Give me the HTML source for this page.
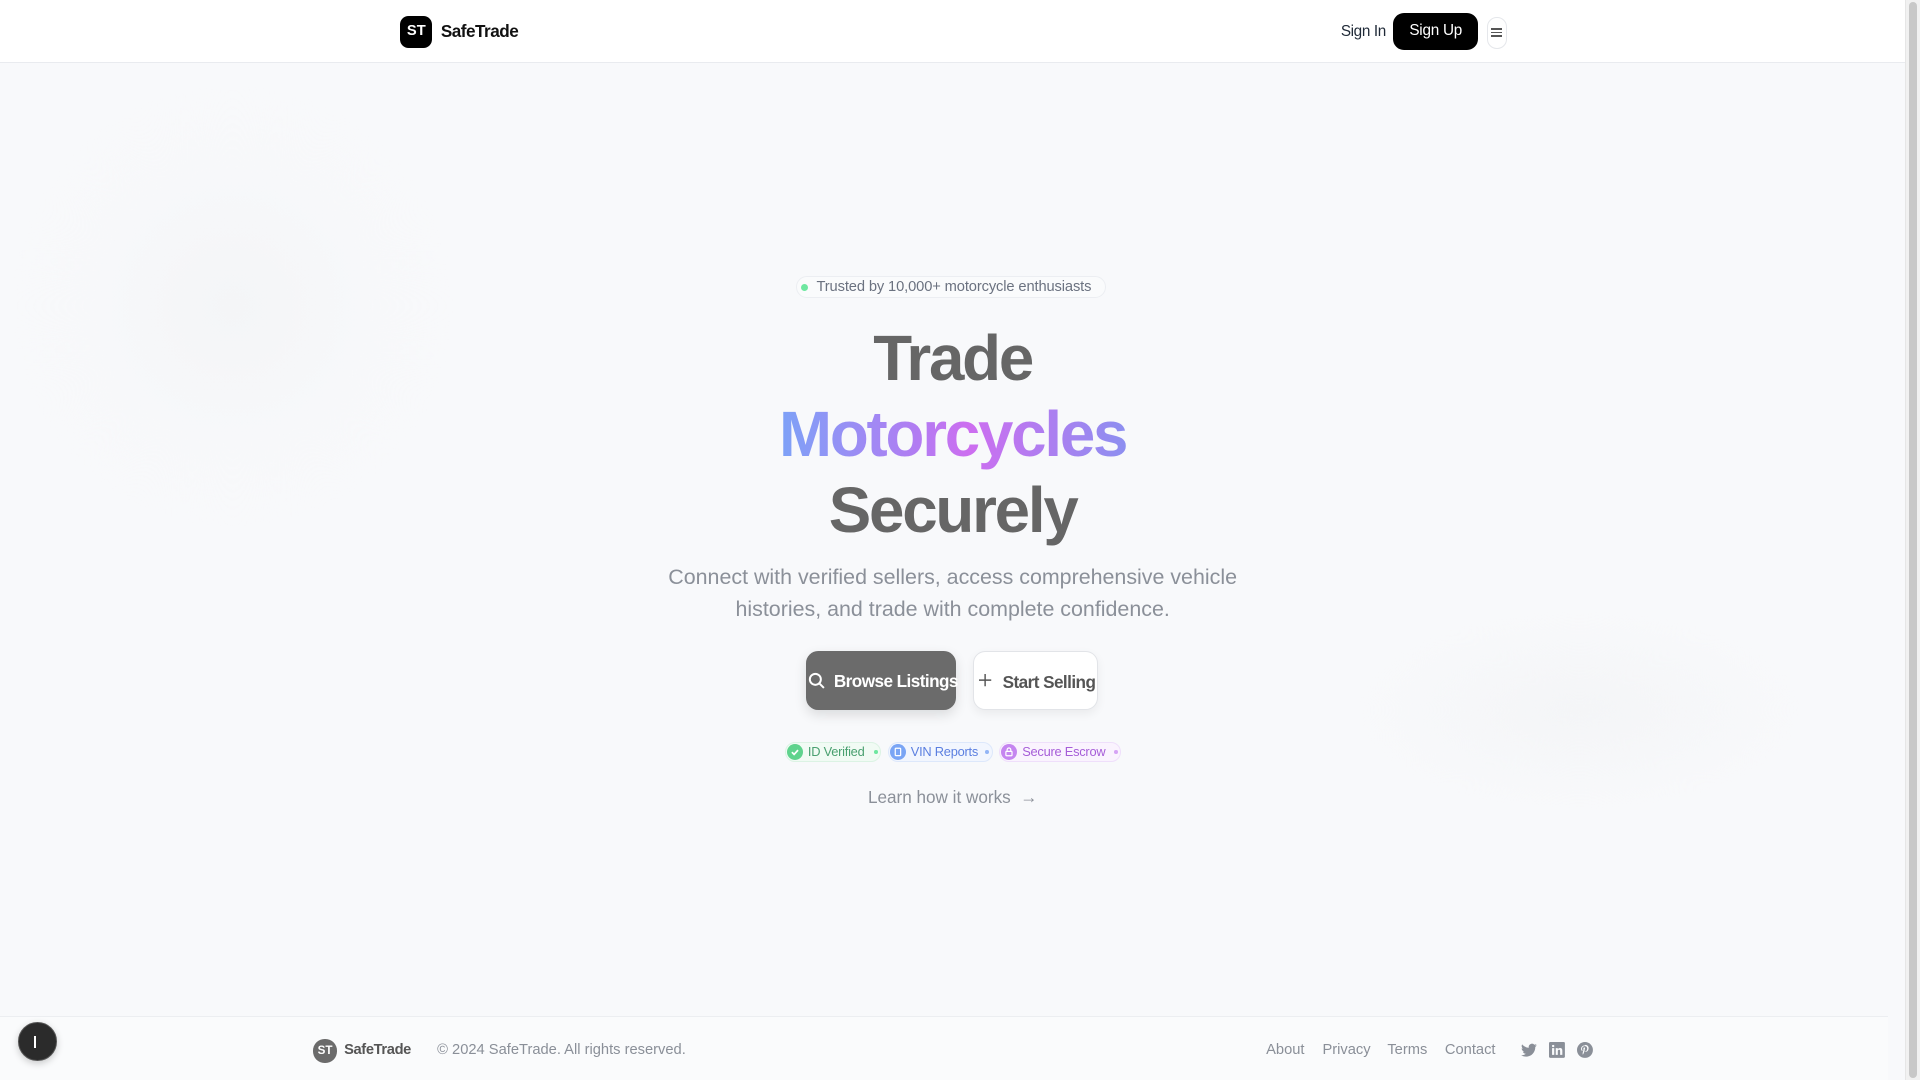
<!DOCTYPE html>
<html><head><meta charset="utf-8"><style>
html,body{margin:0;padding:0;overflow:hidden}
body{width:1568px;height:882px;zoom:1.22449;font-family:"Liberation Sans",sans-serif;background:#f8f9fb;position:relative}
.main{position:absolute;left:0;top:0;width:1556px;height:882px;background:radial-gradient(circle at 190px 250px,#f4f5f7 0,#f7f8fa 110px,transparent 180px),radial-gradient(ellipse at 1290px 580px,#f4f5f7 0,transparent 180px),#f8f9fb}
.sb{position:absolute;left:1556px;top:0;width:12px;height:882px;background:#f1f1f1;border-left:1px solid #e6e6e6}
.sb:after{content:"";position:absolute;left:2px;top:2px;width:7px;height:878px;background:#c8c8c8;border-radius:4px}
header{position:absolute;left:0;top:0;width:1556px;height:51px;background:#fff;border-bottom:1px solid #e9ebef}
.logo{position:absolute;left:327px;top:13px;width:26px;height:26px;background:#000;border-radius:7px;color:#fff;font-weight:bold;font-size:12px;text-align:center;line-height:26px}
.brand{position:absolute;left:360px;top:17px;font-weight:bold;font-size:14px;letter-spacing:-.4px;color:#111}
.signin{position:absolute;left:1095px;top:19px;font-size:12.5px;letter-spacing:-.3px;color:#1f2937}
.signup{position:absolute;left:1138px;top:11px;width:69px;height:30px;background:#000;border-radius:9px;color:#fff;font-size:12.5px;letter-spacing:-.2px;text-align:center;line-height:30px}
.menu{position:absolute;left:1214px;top:14px;width:15px;height:24px;border:1px solid #e5e7eb;border-radius:8px;background:#fff}
.menu i{position:absolute;left:3px;width:9px;height:1.5px;background:#555}
.c{position:absolute;left:0;width:1556px;text-align:center}
.pill{position:absolute;left:650px;top:225px;width:252px;height:17px;border:1px solid #eceef2;border-radius:10px;font-size:12px;letter-spacing:-.1px;color:#6b7280;line-height:17px;background:#fafbfc}
.pill b{position:absolute;left:3px;top:6px;width:6px;height:6px;border-radius:50%;background:#6ee7a0}
.pill span{position:absolute;left:16px;top:0}
h1{margin:0;font-size:52px;line-height:62px;font-weight:bold;color:#666;letter-spacing:-1.8px}
.grad{background:linear-gradient(90deg,#7da2f7,#b27cf2 40%,#cd6ef0 55%,#8d8ff0);-webkit-background-clip:text;background-clip:text;color:transparent}
p.sub{margin:0;font-size:17.5px;line-height:26px;color:#8b9099;letter-spacing:0}
.btn1{position:absolute;left:658px;top:532px;width:123px;height:48px;background:#6b6b6b;border-radius:10px;color:#fff;font-weight:bold;font-size:14px;letter-spacing:-.45px;box-shadow:0 4px 10px rgba(0,0,0,.12)}
.btn2{position:absolute;left:795px;top:532px;width:100px;height:46px;background:#fff;border:1px solid #e2e4e8;border-radius:10px;color:#555;font-weight:bold;font-size:14px;letter-spacing:-.45px;box-shadow:0 3px 8px rgba(0,0,0,.06)}
.btn1 span,.btn2 span{position:absolute;top:16px;white-space:nowrap}
.badge{position:absolute;top:606px;height:15px;border-radius:9px;font-size:10.5px;letter-spacing:-.2px;line-height:15px;white-space:nowrap}
.badge .ic{position:absolute;left:1px;top:1px;width:13px;height:13px;border-radius:50%}
.badge .t{position:absolute;left:18px;top:0}
.badge .d{position:absolute;top:6px;width:3px;height:3px;border-radius:50%}
footer{position:absolute;left:0;top:830px;width:1542px;height:52px;background:#fafbfc;border-top:1px solid #eceef1}
.fl{position:absolute;top:20px;font-size:12px;color:#8a8f98}
.fab{position:absolute;left:15px;top:835px;width:30px;height:30px;border-radius:50%;background:#2b2b2b;border:1px solid #555;box-shadow:0 2px 6px rgba(0,0,0,.2)}
.fab:after{content:"";position:absolute;left:12px;top:10px;width:1.5px;height:10px;background:#fff}
</style></head><body>
<div class="main"></div>
<div class="sb"></div>
<header>
<div class="logo">ST</div><div class="brand">SafeTrade</div>
<div class="signin">Sign In</div>
<div class="signup">Sign Up</div>
<div class="menu"><i style="top:8px"></i><i style="top:11px"></i><i style="top:14px"></i></div>
</header>
<div class="pill"><b></b><span>Trusted by 10,000+ motorcycle enthusiasts</span></div>
<div class="c" style="top:262px"><h1>Trade</h1><h1><span class="grad">Motorcycles</span></h1><h1>Securely</h1></div>
<div class="c" style="top:459px"><p class="sub">Connect with verified sellers, access comprehensive vehicle<br>histories, and trade with complete confidence.</p></div>
<div class="btn1"><svg style="position:absolute;left:2px;top:17px" width="14" height="14" viewBox="0 0 14 14" fill="none" stroke="#fff" stroke-width="1.6"><circle cx="6" cy="6" r="4.5"/><path d="M9.3 9.3L13 13"/></svg><span style="left:23px">Browse Listings</span></div>
<div class="btn2"><svg style="position:absolute;left:4px;top:18px" width="10" height="10" viewBox="0 0 11 11" stroke="#555" stroke-width="1.3"><path d="M5.5 0v11M0 5.5h11"/></svg><span style="left:23px">Start Selling</span></div>
<div class="badge" style="left:641px;width:77px;background:#f1fbf4;border:1px solid #dcf3e4;color:#4aa070"><div class="ic" style="background:#5fd38d"><svg width="13" height="13" viewBox="0 0 13 13" fill="none" stroke="#fff" stroke-width="1.4"><path d="M4 6.7l1.8 1.8L9 5"/></svg></div><span class="t">ID Verified</span><div class="d" style="left:72px;background:#6ee7a0"></div></div>
<div class="badge" style="left:725px;width:84px;background:#f2f6fe;border:1px solid #dde8fb;color:#5b7fe0"><div class="ic" style="background:#7aa5f5"><svg width="13" height="13" viewBox="0 0 13 13" fill="none" stroke="#fff" stroke-width="1"><rect x="4.3" y="3.5" width="4.4" height="6" rx=".6"/></svg></div><span class="t">VIN Reports</span><div class="d" style="left:79px;background:#93b5f6"></div></div>
<div class="badge" style="left:816px;width:98px;background:#faf3fe;border:1px solid #efdffb;color:#a65dd8"><div class="ic" style="background:#c585f0"><svg width="13" height="13" viewBox="0 0 13 13" fill="none" stroke="#fff" stroke-width="1"><rect x="4" y="6" width="5" height="3.6" rx=".5"/><path d="M5 6V4.8a1.5 1.5 0 013 0V6"/></svg></div><span class="t">Secure Escrow</span><div class="d" style="left:93px;background:#d6a3f5"></div></div>
<div class="c" style="top:643px;font-size:14px;color:#8b9099">Learn how it works &nbsp;→</div>
<footer>
<div style="position:absolute;left:256px;top:18px;width:19px;height:19px;border-radius:50%;background:#6b6b6b;color:#fff;font-size:9.5px;font-weight:bold;text-align:center;line-height:19px">ST</div>
<div class="fl" style="left:281px;color:#555;font-weight:bold;letter-spacing:-.3px">SafeTrade</div>
<div class="fl" style="left:357px">© 2024 SafeTrade. All rights reserved.</div>
<div class="fl" style="left:1034px">About</div>
<div class="fl" style="left:1080px">Privacy</div>
<div class="fl" style="left:1133px">Terms</div>
<div class="fl" style="left:1180px">Contact</div>
<svg style="position:absolute;left:1242px;top:21px" width="13" height="12" viewBox="0 0 24 20" fill="#8a8f98"><path d="M24 2.4a9.8 9.8 0 01-2.8.8A4.9 4.9 0 0023.3.4a9.9 9.9 0 01-3.1 1.2A4.9 4.9 0 0011.8 6 14 14 0 011.7.9a4.9 4.9 0 001.5 6.6A4.9 4.9 0 011 6.9a4.9 4.9 0 003.9 4.8 4.9 4.9 0 01-2.2.1 4.9 4.9 0 004.6 3.4A9.9 9.9 0 010 17.3 14 14 0 007.5 19.5c9.1 0 14-7.5 14-14v-.6A10 10 0 0024 2.4z"/></svg>
<svg style="position:absolute;left:1265px;top:20px" width="13" height="13" viewBox="0 0 13 13"><rect width="13" height="13" rx="1" fill="#8a8f98"/><path d="M2.5 5h1.8v5.5H2.5zM3.4 2.3a1 1 0 110 2 1 1 0 010-2zM5.5 5h1.7v.8c.3-.5.9-.9 1.8-.9 1.6 0 1.9 1 1.9 2.4v3.2H9.1V7.7c0-.7 0-1.4-.9-1.4s-1 .6-1 1.3v2.9H5.5z" fill="#fafbfc"/></svg>
<svg style="position:absolute;left:1288px;top:20px" width="13" height="13" viewBox="0 0 13 13"><circle cx="6.5" cy="6.5" r="6.5" fill="#8a8f98"/><path d="M6.6 2.8c-2.2 0-3.3 1.5-3.3 2.8 0 .8.3 1.4.9 1.7.1 0 .2 0 .2-.1l.1-.4c0-.1 0-.2-.1-.3-.2-.2-.3-.5-.3-.9 0-1.2.9-2.2 2.3-2.2 1.2 0 1.9.8 1.9 1.8 0 1.3-.6 2.4-1.4 2.4-.5 0-.8-.4-.7-.9.1-.6.4-1.2.4-1.6 0-.4-.2-.7-.6-.7-.5 0-.8.5-.8 1.1 0 .4.1.7.1.7l-.6 2.4c-.2.7 0 1.6 0 1.7l.1 0c.1-.1.7-.9.9-1.6l.3-1.3c.2.3.6.6 1.1.6 1.5 0 2.4-1.3 2.4-3.1 0-1.4-1.1-2.6-3-2.6z" fill="#fafbfc"/></svg>
</footer>
<div class="fab"></div>
</body></html>
